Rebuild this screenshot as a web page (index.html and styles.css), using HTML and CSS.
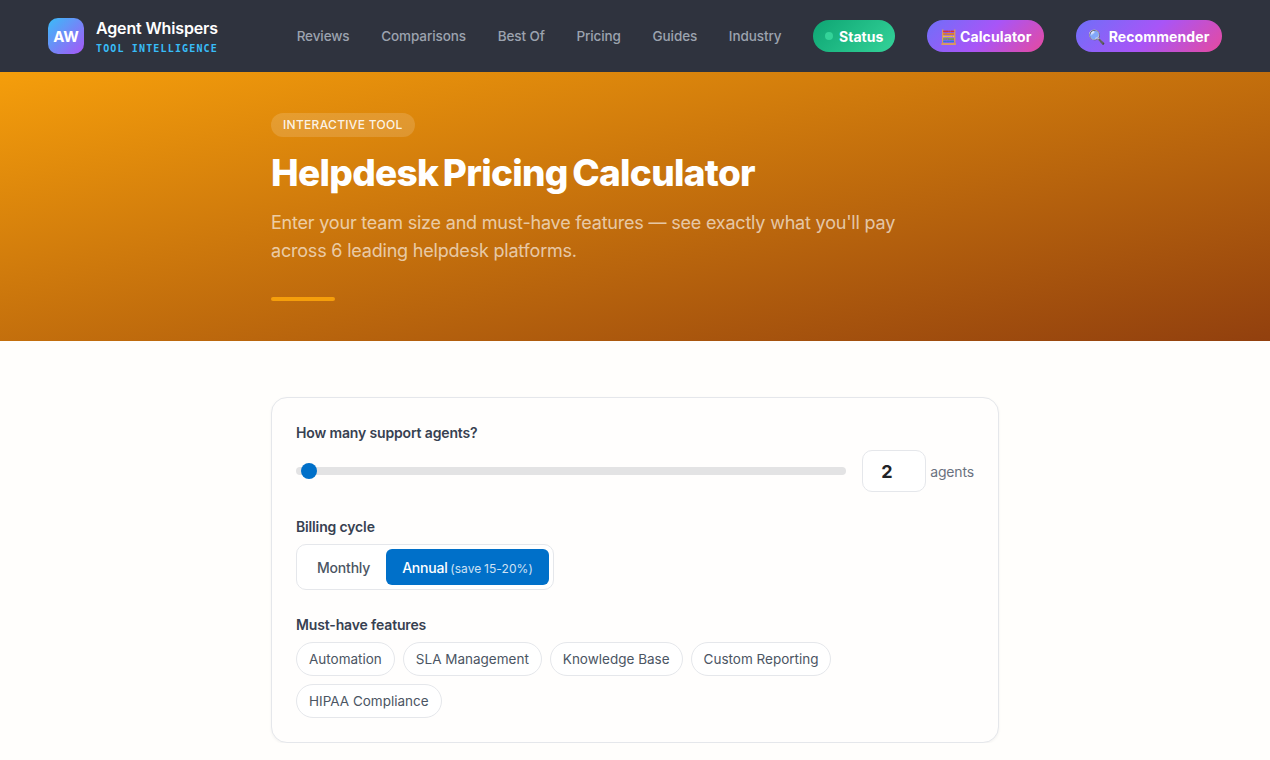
FILE: index.html
```html
<!doctype html>
<html lang="en">
<head>
  <meta charset="UTF-8">
  <meta name="viewport" content="width=device-width, initial-scale=1.0">
  <title>Helpdesk Pricing Calculator</title>
  <link rel="stylesheet" href="styles.css">
</head>
<body>
<nav class="topnav">
  <a class="brand" href="#">
    <span class="brand-mark">AW</span>
    <span class="brand-text">
      <span class="brand-name">Agent Whispers</span>
      <span class="brand-sub">TOOL INTELLIGENCE</span>
    </span>
  </a>
  <a class="nav-link" href="#">Reviews</a>
  <a class="nav-link" href="#">Comparisons</a>
  <a class="nav-link" href="#">Best Of</a>
  <a class="nav-link" href="#">Pricing</a>
  <a class="nav-link" href="#">Guides</a>
  <a class="nav-link" href="#">Industry</a>
  <a class="pill pill-green" href="#"><span class="dot"></span>Status</a>
  <a class="pill pill-purple" href="#">🧮 Calculator</a>
  <a class="pill pill-purple" href="#">🔍 Recommender</a>
</nav>

<header class="hero">
  <div class="container">
    <span class="badge">INTERACTIVE TOOL</span>
    <h1>Helpdesk Pricing Calculator</h1>
    <p>Enter your team size and must-have features — see exactly what you'll pay across 6 leading helpdesk platforms.</p>
    <div class="accent"></div>
  </div>
</header>

<main class="container">
  <form class="card">
    <label class="field-label" for="agents">How many support agents?</label>
    <div class="slider-row">
      <input class="slider" id="agents" type="range" min="1" max="100" value="2">
      <input class="agent-count" type="number" value="2">
      <span class="unit">agents</span>
    </div>

    <div class="field-label">Billing cycle</div>
    <div class="toggle">
      <button type="button">Monthly</button>
      <button type="button" class="active">Annual <small>(save 15-20%)</small></button>
    </div>

    <div class="field-label">Must-have features</div>
    <div class="chips">
      <button type="button" class="chip">Automation</button>
      <button type="button" class="chip">SLA Management</button>
      <button type="button" class="chip">Knowledge Base</button>
      <button type="button" class="chip">Custom Reporting</button>
      <button type="button" class="chip">HIPAA Compliance</button>
    </div>
  </form>
</main>
</body>
</html>
```

FILE: styles.css
```css
html, body { margin: 0; padding: 0; }
* { box-sizing: border-box; }
body { background: #fffefc; color: #374151; font-family: "Inter", "Noto Sans", sans-serif; }
a { text-decoration: none; }
button, input { font-family: inherit; }

.topnav { height: 72px; padding: 0 48px; background: #2f333e; display: flex; align-items: center; justify-content: space-between; }
.brand { display: flex; align-items: center; gap: 12px; margin-right: 47px; }
.brand-mark { width: 36px; height: 36px; border-radius: 10px; background: linear-gradient(135deg, #38bdf8, #a855f7); color: #fff; font-size: 15px; font-weight: 700; display: flex; align-items: center; justify-content: center; }
.brand-text { display: flex; flex-direction: column; gap: 5px; }
.brand-name { color: #fff; font-size: 16px; font-weight: 600; line-height: 20px; letter-spacing: -.15px; }
.brand-sub { color: #38bdf8; font-family: "DejaVu Sans Mono", monospace; font-size: 10px; font-weight: 700; letter-spacing: 1.15px; line-height: 12px; }
.nav-link { color: #9ca3af; font-size: 13.5px; font-weight: 500; letter-spacing: -.1px; }
.pill { height: 32px; padding: 0 12px; border-radius: 16px; color: #fff; font-size: 14px; font-weight: 700; display: flex; align-items: center; }
.pill-green { background: linear-gradient(135deg, #0ea573, #34d399); }
.pill-purple { padding: 0 12.5px; background: linear-gradient(135deg, #6f6ff8, #a855f7 50%, #e64a9f 100%); letter-spacing: .1px; }
.dot { width: 8px; height: 8px; border-radius: 50%; background: #34d399; margin-right: 6px; }

.container { width: 728px; margin: 0 auto; }

.hero { height: 269px; padding-top: 41px; background: linear-gradient(168deg, #f59e0b, #92400e); }
.badge { display: inline-block; height: 24px; padding: 0 12px; border-radius: 12px; background: rgba(255, 255, 255, .15); color: rgba(255, 255, 255, .9); font-size: 12px; font-weight: 500; letter-spacing: .3px; line-height: 24px; }
.hero h1 { margin: 12px 0; color: #fff; font-size: 37px; font-weight: 800; line-height: 48px; letter-spacing: -.7px; word-spacing: -3px; }
.hero p { margin: 0; max-width: 640px; color: rgba(255, 255, 255, .65); font-size: 18px; line-height: 28px; letter-spacing: -.2px; }
.accent { width: 64px; height: 4px; margin-top: 32px; border-radius: 2px; background: #f59e0b; }

.card { margin-top: 56px; padding: 24px; height: 346px; background: #fffefd; border: 1px solid #e5e7eb; border-radius: 16px; box-shadow: 0 1px 3px rgba(0, 0, 0, .05); }
.field-label { display: block; color: #374151; font-size: 14px; font-weight: 600; line-height: 21px; letter-spacing: -.15px; margin-bottom: 7px; }

.slider-row { display: flex; align-items: center; margin-bottom: 24px; }
.slider { -webkit-appearance: none; appearance: none; flex: 1; height: 8px; margin: 0 16px 0 0; border-radius: 4px; background: #e3e3e4; }
.slider::-webkit-slider-thumb { -webkit-appearance: none; width: 16px; height: 16px; border-radius: 50%; background: #0070c9; border: 0; }
.agent-count { width: 64px; height: 42px; padding: 0 0 0 18px; border: 1px solid #e5e7eb; border-radius: 10px; background: #fff; color: #1f2328; font-size: 18px; font-weight: 700; -moz-appearance: textfield; }
.agent-count::-webkit-inner-spin-button { -webkit-appearance: none; }
.unit { margin-left: 4px; color: #6b7280; font-size: 14px; letter-spacing: -.15px; }

.toggle { display: inline-flex; padding: 4px; margin-bottom: 24px; border: 1px solid #e5e7eb; border-radius: 10px; background: #fff; vertical-align: top; }
.toggle button { height: 36px; padding: 0 16px; border: 0; border-radius: 6px; background: transparent; color: #4b5563; font-size: 14px; font-weight: 500; letter-spacing: -.2px; word-spacing: -1px; }
.toggle button.active { background: #0070c9; color: #fff; }
.toggle small { font-size: 12px; font-weight: 400; letter-spacing: .1px; opacity: .8; }

.chips { display: flex; flex-wrap: wrap; gap: 8px; }
.chip { height: 34px; padding: 0 12px; border: 1px solid #e5e7eb; border-radius: 17px; background: #fff; color: #4b5563; font-size: 13.5px; }
```
